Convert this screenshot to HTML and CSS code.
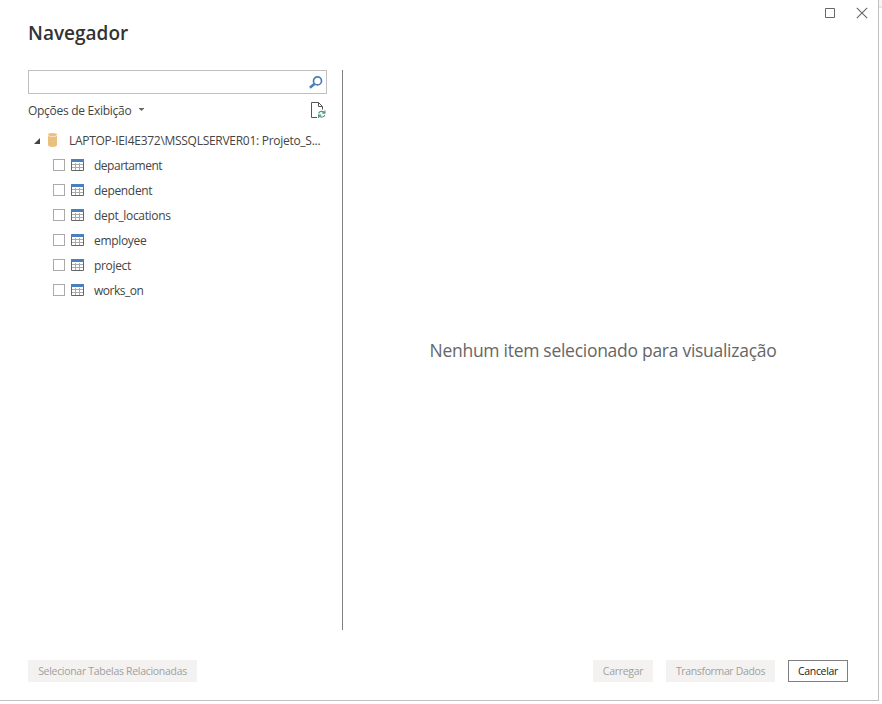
FILE: index.html
```
<!DOCTYPE html>
<html lang="pt-BR">
<head>
<meta charset="utf-8">
<title>Navegador</title>
<link rel="stylesheet" href="styles.css">
</head>
<body>
<svg class="defs" width="0" height="0" aria-hidden="true">
  <symbol id="table" viewBox="0 0 13 12">
    <path fill="#fff" d="M0 0h13v12H0z"/>
    <path stroke="#aaa" fill="none" d="M4.5 4v7M8.5 4v7M1 5.500h11M1 8.500h11"/>
    <path stroke="#666" fill="none" d="M.5 3v8.500h12V3"/>
    <path fill="#4a80bd" d="M0 0h13v3H0z"/>
  </symbol>
</svg>
<div class="dialog">
  <div class="window-controls">
    <svg width="10" height="10" viewBox="0 0 10 10"><path d="M.5.5h9v9h-9z" fill="none" stroke="#666"/></svg>
    <svg width="12" height="12" viewBox="0 0 12 12"><path d="M.8.8l10.400 10.400M11.200.8L.8 11.200" fill="none" stroke="#666" stroke-width="1.100"/></svg>
  </div>
  <h1 class="title">Navegador</h1>
  <main class="content">
    <section class="sidebar">
      <div class="search">
        <svg width="14" height="13" viewBox="0 0 14 13"><circle cx="8.500" cy="4.900" r="4" fill="none" stroke="#4a7ebb" stroke-width="1.700"/><path d="M5.600 7.700L.9 11.700" stroke="#4a7ebb" stroke-width="2.500"/></svg>
      </div>
      <div class="options">
        <span>Opções de Exibição</span>
        <svg class="caret" width="5" height="3" viewBox="0 0 5 3"><path d="M0 0h5v.6L2.500 3 0 .6z" fill="#666"/></svg>
        <svg class="refresh" width="15" height="17" viewBox="0 0 15 17">
          <path d="M6 15.500H.5V.5h7l4 4v3M7.500.5v4h4" fill="none" stroke="#555"/>
          <path d="M7.600 11.500c.8-2.300 4-2.800 5.500-1M13.900 8.500v2.700h-2.700M13.900 12.900c-.8 2.400-4 2.800-5.500 1M7.600 16v-2.800h2.700" fill="none" stroke="#4f9a7b" stroke-width="1.200"/>
        </svg>
      </div>
      <div class="root">
        <svg class="expander" width="6" height="6" viewBox="0 0 6 6"><path d="M6 0v6H0z" fill="#444"/></svg>
        <svg class="database" width="9" height="14" viewBox="0 0 9 14"><path d="M0 2.700v9.300C0 14.600 9 14.600 9 12V2.700C7 3.900 2 3.900 0 2.700z" fill="#e9c07d"/><ellipse cx="4.500" cy="1.500" rx="4.500" ry="1.500" fill="#e9c07d"/></svg>
        <span>LAPTOP-IEI4E372\MSSQLSERVER01: Projeto_S...</span>
      </div>
      <ul class="tables">
        <li><i class="checkbox"></i><svg width="13" height="12"><use href="#table"/></svg><span class="tight">departament</span></li>
        <li><i class="checkbox"></i><svg width="13" height="12"><use href="#table"/></svg><span>dependent</span></li>
        <li><i class="checkbox"></i><svg width="13" height="12"><use href="#table"/></svg><span>dept_locations</span></li>
        <li><i class="checkbox"></i><svg width="13" height="12"><use href="#table"/></svg><span>employee</span></li>
        <li><i class="checkbox"></i><svg width="13" height="12"><use href="#table"/></svg><span>project</span></li>
        <li><i class="checkbox"></i><svg width="13" height="12"><use href="#table"/></svg><span class="tight">works_on</span></li>
      </ul>
    </section>
    <section class="preview"><p>Nenhum item selecionado para visualização</p></section>
  </main>
  <footer class="actions">
    <button class="related" disabled>Selecionar Tabelas Relacionadas</button>
    <button class="load" disabled>Carregar</button>
    <button class="transform" disabled>Transformar Dados</button>
    <button class="cancel">Cancelar</button>
  </footer>
</div>
<div class="behind"></div>
</body>
</html>
```
FILE: styles.css
```
* { box-sizing: border-box; }
body {
  margin: 0;
  display: flex;
  height: 704px;
  background: #fff;
  color: #444;
  font: 12px/16px "Open Sans", "Noto Sans", sans-serif;
  letter-spacing: -0.28px;
  white-space: nowrap;
  overflow: hidden;
}
svg { display: block; flex: none; }
.defs { position: absolute; }
.dialog {
  display: flex;
  flex-direction: column;
  width: 879px;
  height: 701px;
  border: solid #c0c0c0;
  border-width: 0 1px 1px 0;
}
.behind { width: 3px; height: 8px; background: #f5f5f5; border-bottom: 2px solid #e8e8e8; }
.window-controls {
  display: flex;
  align-items: center;
  justify-content: flex-end;
  gap: 21px;
  height: 20px;
  padding: 6px 10px 0 0;
}
.title {
  margin: 0 0 0 28px;
  height: 50px;
  font-size: 19px;
  line-height: 26px;
  font-weight: 600;
  letter-spacing: 0;
  color: #333;
}
.content { display: flex; height: 560px; }
.sidebar { width: 343px; padding: 0 15px 0 28px; border-right: 1px solid #808080; }
.search {
  display: flex;
  align-items: center;
  justify-content: flex-end;
  height: 24px;
  padding-right: 3px;
  border: 1px solid #c0c0c0;
}
.options { display: flex; align-items: center; height: 33px; }
.caret { margin: 0 0 3px 8px; }
.refresh { margin-left: auto; margin-right: 1px; }
.root { display: flex; align-items: center; height: 26px; padding-left: 6px; }
.root span { margin-top: 2px; }
.expander { margin-top: 2px; }
.database { margin: 0 12px 0 8px; }
.tables { margin: 0; padding: 0; list-style: none; }
.tables li { display: flex; align-items: center; height: 25px; padding: 0 0 1px 25px; }
.tables span { margin: 2px 0 0 10px; letter-spacing: -0.33px; }
.tables .tight { letter-spacing: -0.49px; }
.checkbox { width: 12px; height: 12px; margin-right: 6px; border: 1px solid #aaa; }
.preview { flex: 1; display: flex; align-items: center; justify-content: center; padding-right: 15px; }
.preview p { margin: 0; font-size: 17.5px; line-height: 24px; letter-spacing: -0.28px; color: #666; }
.actions { display: flex; height: 22px; margin: 30px 30px 0 28px; }
.actions button {
  height: 22px;
  padding: 0;
  border: 0;
  background: #f3f2f1;
  color: #a19f9d;
  font: 10.5px/22px "Open Sans", "Noto Sans", sans-serif;
  letter-spacing: -0.3px;
}
.actions .related { width: 169px; margin-right: auto; }
.actions .load { width: 60px; }
.actions .transform { width: 109px; margin: 0 13px; letter-spacing: -0.36px; }
.actions .cancel { width: 60px; border: 1px solid #808080; background: #fff; color: #222; line-height: 20px; }
```
